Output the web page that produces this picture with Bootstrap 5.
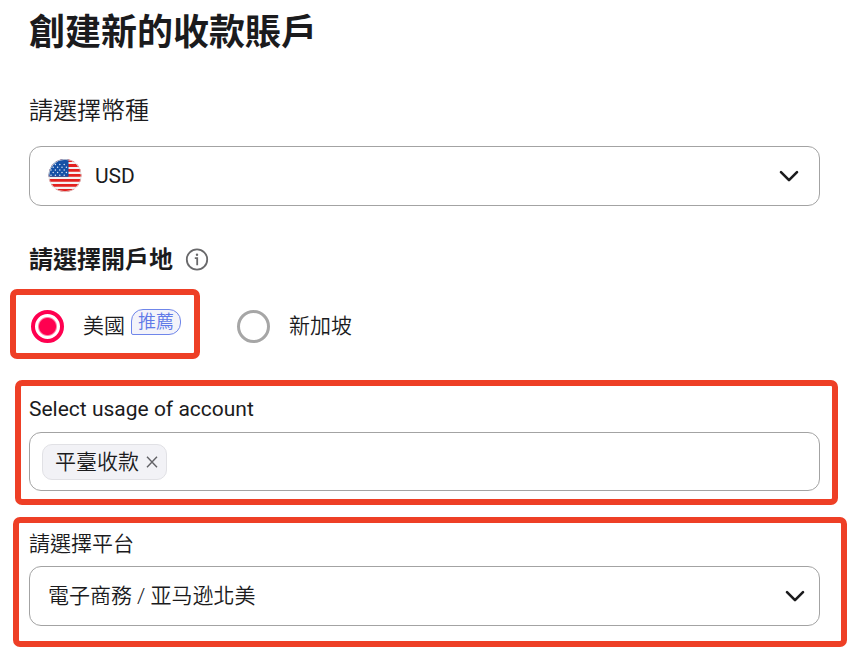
<!DOCTYPE html>
<html lang="zh-Hant">
<head>
<meta charset="utf-8">
<meta name="viewport" content="width=device-width, initial-scale=1">
<title>創建新的收款賬戶</title>
<link href="https://cdn.jsdelivr.net/npm/bootstrap@5.3.0/dist/css/bootstrap.min.css" rel="stylesheet">
<style>
  body { font-family: Roboto, "Noto Sans CJK TC", sans-serif; font-size: 21px; line-height: 32px; color: #1b1b1d; background: #fff; }
  .account-form { padding: 9px 42px 16px 29px; }
  .page-title { font-size: 36px; line-height: 48px; }
  .section-label { font-size: 24px; line-height: 36px; }
  .thin-text { font-weight: 350; }
  .currency-label { margin: 36px 0 17px; }
  .region-label { margin-top: 36px; margin-bottom: 11px; gap: 12px; }
  .field { height: 60px; border: 1px solid #a3a3a3; border-radius: 12px; font-size: 21px; color: inherit; background: #fff; }
  select.field { padding: 2px 56px 0 18px; background-image: none; }
  select.with-flag { padding-left: 65px; }
  .flag { left: 19px; }
  .chevron { right: 20px; }
  .chevron-inset { right: 14px; }
  .marked { border: 6px solid #ee3f26; border-radius: 7px; }
  .marked-option { margin-left: -19px; height: 70px; padding: 4px 13px 0 15px; }
  .marked-usage { margin: 21px -18px 0 -14px; padding: 7px 12px 8px 8px; }
  .marked-platform { margin: 12px -27px 0 -16px; padding: 5px 21px 15px 10px; }
  .usage-label { margin-bottom: 7px; }
  .platform-label { margin-bottom: 6px; }
  .option-radio.form-check-input { width: 33px; height: 33px; margin: 0; border: 3px solid #a6a6a6; }
  .option-radio.form-check-input:checked { border: 4px solid #ff0050; background: radial-gradient(circle, #ff0050 8px, #fff 10px); }
  .option-gap { gap: 19px; }
  .other-option { margin-left: 37px; padding-top: 4px; }
  .recommend { font-size: 18px; line-height: 24px; padding: 0 6px; margin: 0 0 8px 6px; color: #6079e8; background: #f3f3fa; border: 1px solid #6f86ea; border-radius: 12px 12px 12px 2px; }
  .tag-field { height: 59px; padding: 0 12px; }
  .usage-tag { height: 36px; padding: 0 8px 0 12px; gap: 7px; background: #f2f2f6; border: 1px solid #e1e1e5; border-radius: 10px; }
</style>
<script src="https://cdn.jsdelivr.net/npm/bootstrap@5.3.0/dist/js/bootstrap.bundle.min.js" defer></script>
</head>
<body>
<main>
  <form class="account-form">
    <h1 class="page-title fw-bold m-0">創建新的收款賬戶</h1>

    <label for="currency" class="section-label currency-label d-block thin-text">請選擇幣種</label>
    <div class="position-relative d-flex align-items-center">
      <select id="currency" class="form-select field with-flag"><option>USD</option></select>
      <svg class="flag position-absolute pe-none" width="34" height="34" viewBox="0 0 34 34" aria-hidden="true">
        <defs><clipPath id="round"><circle cx="17" cy="16.5" r="16.5"/></clipPath></defs>
        <g clip-path="url(#round)">
          <path fill="#f4f1f2" d="M0 0h34v34H0z"/>
          <path stroke="#e3211f" stroke-width="2.800" d="M0 1.500h34M0 6.500h34M0 11.400h34M0 16.300h34M0 21.300h34M0 26.300h34M0 31.300h34"/>
          <path fill="#1550a5" d="M0 0h20.500v17.700H0z"/>
          <path stroke="#dbe6f6" stroke-width="1.500" stroke-linecap="round" stroke-dasharray="0 4.400" d="M3 5.500h17M5.200 8.200h14M3 10.900h16M5.200 13.600h14M3 16.200h16"/>
        </g>
        <circle cx="17" cy="16.5" r="16.2" fill="none" stroke="#dedede" stroke-width=".8"/>
      </svg>
      <svg class="chevron position-absolute pe-none" width="22" height="22" viewBox="0 0 22 22" fill="none" stroke="#1b1b1d" stroke-width="2.600" stroke-linecap="round" stroke-linejoin="round" aria-hidden="true"><path d="M3 7.200l8 8 8-8"/></svg>
    </div>

    <div class="region-label d-flex align-items-center">
      <h2 id="region" class="section-label fw-bold m-0">請選擇開戶地</h2>
      <button type="button" class="btn p-0 border-0 d-flex" aria-label="說明">
        <svg width="24" height="24" viewBox="0 0 24 24" fill="none" stroke="#69696b" aria-hidden="true"><circle cx="12" cy="11.500" r="10.200" stroke-width="1.800"/><path stroke-width="1.800" d="M9.800 10.200h2.400v7"/><circle cx="12" cy="6.800" r="1.200" fill="#69696b" stroke="none"/></svg>
      </button>
    </div>
    <div class="d-flex align-items-center" role="radiogroup" aria-labelledby="region">
      <div class="marked marked-option option-gap d-flex align-items-center">
        <input class="form-check-input option-radio" type="radio" name="region" id="us" checked>
        <label for="us" class="d-flex align-items-center thin-text">美國<span class="recommend">推薦</span></label>
      </div>
      <div class="other-option option-gap d-flex align-items-center">
        <input class="form-check-input option-radio" type="radio" name="region" id="sg">
        <label for="sg" class="thin-text">新加坡</label>
      </div>
    </div>

    <section class="marked marked-usage">
      <label for="usage" class="usage-label d-block">Select usage of account</label>
      <div class="field tag-field d-flex align-items-center">
        <span class="usage-tag d-flex align-items-center flex-shrink-0 thin-text">平臺收款
          <button type="button" class="btn p-0 border-0 d-flex" aria-label="移除">
            <svg width="12" height="12" viewBox="0 0 12 12" stroke="#626266" stroke-width="1.400" aria-hidden="true"><path d="M1 .8l10 10.400M11 .8L1 11.200"/></svg>
          </button>
        </span>
        <input id="usage" type="text" class="form-control border-0 shadow-none bg-transparent">
      </div>
    </section>

    <section class="marked marked-platform">
      <label for="platform" class="platform-label d-block thin-text">請選擇平台</label>
      <div class="position-relative d-flex align-items-center">
        <select id="platform" class="form-select field thin-text"><option>電子商務 / 亚马逊北美</option></select>
        <svg class="chevron chevron-inset position-absolute pe-none" width="22" height="22" viewBox="0 0 22 22" fill="none" stroke="#1b1b1d" stroke-width="2.600" stroke-linecap="round" stroke-linejoin="round" aria-hidden="true"><path d="M3 7.200l8 8 8-8"/></svg>
      </div>
    </section>
  </form>
</main>
</body>
</html>
